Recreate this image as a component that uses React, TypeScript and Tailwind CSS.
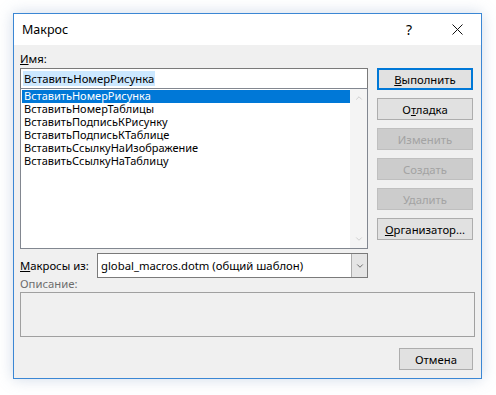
import { ChevronDown, ChevronUp } from 'lucide-react';

const macros = [
    'ВставитьНомерРисунка',
    'ВставитьНомерТаблицы',
    'ВставитьПодписьКРисунку',
    'ВставитьПодписьКТаблице',
    'ВставитьСсылкуНаИзображение',
    'ВставитьСсылкуНаТаблицу',
];

type BtnProps = {
    children: React.ReactNode;
    primary?: boolean;
    disabled?: boolean;
};

function DlgButton({ children, primary, disabled }: BtnProps) {
    if (disabled) {
        return (
            <div className="h-[22px] w-[96px] flex items-center justify-center bg-[#cccccc] border border-[#bfbfbf] text-[#a3a3a3]">
                {children}
            </div>
        );
    }
    return (
        <div className={`h-[22px] w-[96px] flex items-center justify-center bg-[#e1e1e1] text-black ${primary ? 'border-2 border-[#0078d7]' : 'border border-[#adadad]'}`}>
            {children}
        </div>
    );
}

export default function App() {
    return (
        <div className="w-[496px] h-[395px] bg-white pt-[13px] pl-[13px] text-[11.3px] leading-[13px] text-black" style={{ fontFamily: '"Noto Sans", "Open Sans", sans-serif' }}>
            <div className="w-[469px] h-[366px] border border-[#3b87d4] bg-[#f0f0f0] shadow-[0_0_14px_rgba(120,150,190,0.35)] flex flex-col">
                {/* title bar */}
                <div className="h-[31px] bg-white flex items-center pl-[8px]">
                    <span className="text-[12.5px]">Макрос</span>
                    <span className="ml-auto mr-[40px] text-[14px]">?</span>
                    <svg width="11" height="11" viewBox="0 0 11 11" className="mr-[18px]">
                        <path d="M0.5 0.5 L10.5 10.5 M10.5 0.5 L0.5 10.5" stroke="#111" strokeWidth="1" />
                    </svg>
                </div>

                <div className="flex-1 flex flex-col pl-[6px] pr-[7px]">
                    <div className="flex gap-[9px]">
                        {/* left column */}
                        <div className="w-[348px] shrink-0 flex flex-col">
                            <div className="h-[23px] flex items-end pb-[3px]">
                                <span><span className="underline">И</span>мя:</span>
                            </div>
                            <div className="h-[20px] bg-white border border-[#7a7a7a] border-b-0 flex items-center pl-[2px]">
                                <span className="bg-[#cce8ff] px-[1px] leading-[15px]">ВставитьНомерРисунка</span>
                            </div>
                            <div className="h-[161px] bg-white border border-[#828790] flex">
                                <div className="flex-1 pt-[1px] pl-[1px] text-[11px]">
                                    {macros.map((m, i) => (
                                        <div key={m} className={`h-[13px] leading-[12px] pl-[2px] ${i === 0 ? 'bg-[#0078d7] text-white' : ''}`}>
                                            {m}
                                        </div>
                                    ))}
                                </div>
                                <div className="w-[17px] bg-[#f4f4f4] flex flex-col items-center justify-between py-[4px]">
                                    <ChevronUp size={10} strokeWidth={2} color="#c8c8c8" />
                                    <ChevronDown size={10} strokeWidth={2} color="#c8c8c8" />
                                </div>
                            </div>
                            <div className="mt-[4px] h-[25px] flex items-center">
                                <div className="w-[77px] shrink-0"><span className="underline">М</span>акросы из:</div>
                                <div className="w-[271px] shrink-0 h-[25px] bg-white border border-[#7a7a7a] flex">
                                    <span className="flex-1 flex items-center pl-[3px]">global_macros.dotm (общий шаблон)</span>
                                    <div className="w-[16px] bg-[#e5e5e5] border-l border-[#acacac] flex items-center justify-center">
                                        <ChevronDown size={10} strokeWidth={2} color="#555" />
                                    </div>
                                </div>
                            </div>
                        </div>

                        {/* right buttons */}
                        <div className="pt-[23px] flex flex-col gap-[8px]">
                            <DlgButton primary><span><span className="underline">В</span>ыполнить</span></DlgButton>
                            <DlgButton><span>О<span className="underline">т</span>ладка</span></DlgButton>
                            <DlgButton disabled>Изменить</DlgButton>
                            <DlgButton disabled>Создать</DlgButton>
                            <DlgButton disabled>Удалить</DlgButton>
                            <DlgButton><span><span className="underline">О</span>рганизатор...</span></DlgButton>
                        </div>
                    </div>

                    <div className="h-[14px] leading-[12px] text-[#6d6d6d]">Описание:</div>
                    <div className="h-[45px] w-[455px] border border-[#a0a0a0] bg-[#f0f0f0]"></div>
                    <div className="mt-[11px] flex justify-end pr-[1px]">
                        <div className="h-[22px] w-[74px] flex items-center justify-center bg-[#e1e1e1] border border-[#adadad]">Отмена</div>
                    </div>
                </div>
            </div>
        </div>
    );
}
